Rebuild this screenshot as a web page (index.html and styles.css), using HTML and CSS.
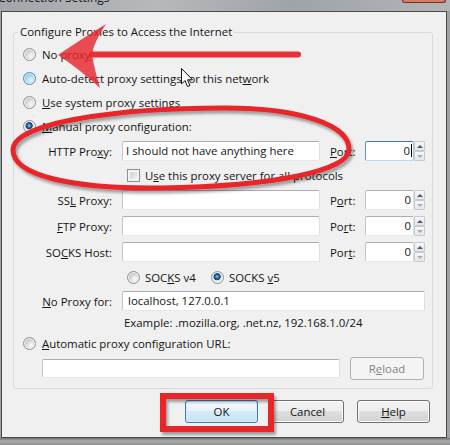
FILE: index.html
```html
<!DOCTYPE html>
<html>
<head>
<meta charset="utf-8">
<title>Connection Settings</title>
<link rel="stylesheet" href="styles.css">
</head>
<body>
<div class="titlebar"><span class="title">Connection Settings</span><span class="close"></span></div>
<div class="window">
  <fieldset class="group">
    <legend>Configure Proxies to Access the Internet</legend>
    <div class="opt"><span class="radio"></span><span>No prox<u>y</u></span></div>
    <div class="opt"><span class="radio hover"></span><span>Auto-detect proxy settings for this net<u>w</u>ork</span></div>
    <div class="opt"><span class="radio"></span><span><u>U</u>se system proxy settings</span></div>
    <div class="opt"><span class="radio on"></span><span><u>M</u>anual proxy configuration:</span></div>
    <div class="manual">
      <span class="lbl">HTTP Pro<u>x</u>y:</span>
      <span class="field">I should not have anything here</span>
      <span class="plbl"><u>P</u>ort:</span>
      <span class="port"><span class="pval focus">0<i class="caret"></i></span><span class="spin"><i class="up"></i><i class="dn"></i></span></span>

      <span class="share"><span class="check"></span><span>U<u>s</u>e this proxy server for all protocols</span></span>

      <span class="lbl">SS<u>L</u> Proxy:</span>
      <span class="field"></span>
      <span class="plbl">P<u>o</u>rt:</span>
      <span class="port"><span class="pval">0</span><span class="spin"><i class="up"></i><i class="dn"></i></span></span>

      <span class="lbl"><u>F</u>TP Proxy:</span>
      <span class="field"></span>
      <span class="plbl">Po<u>r</u>t:</span>
      <span class="port"><span class="pval">0</span><span class="spin"><i class="up"></i><i class="dn"></i></span></span>

      <span class="lbl">SO<u>C</u>KS Host:</span>
      <span class="field"></span>
      <span class="plbl">Por<u>t</u>:</span>
      <span class="port"><span class="pval">0</span><span class="spin"><i class="up"></i><i class="dn"></i></span></span>

      <span class="socks"><span class="rb v4"><span class="radio"></span><span>SOC<u>K</u>S v4</span></span><span class="rb"><span class="radio on"></span><span>SOCKS <u>v</u>5</span></span></span>

      <span class="lbl"><u>N</u>o Proxy for:</span>
      <span class="field wide">localhost, 127.0.0.1</span>

      <span class="example">Example: .mozilla.org, .net.nz, 192.168.1.0/24</span>
    </div>
    <div class="opt"><span class="radio"></span><span><u>A</u>utomatic proxy configuration URL:</span></div>
    <div class="urlrow"><span class="field url"></span><span class="btn reload">R<u>e</u>load</span></div>
  </fieldset>
  <div class="btnrow">
    <span class="btn default">OK</span>
    <span class="btn">Cancel</span>
    <span class="btn"><u>H</u>elp</span>
  </div>
</div>
<svg class="marks" width="450" height="445" viewBox="0 0 450 445">
  <defs>
    <filter id="sh" x="-10%" y="-20%" width="120%" height="150%">
      <feDropShadow dx="2" dy="3" stdDeviation="1.5" flood-color="#000" flood-opacity="0.35"/>
    </filter>
  </defs>
  <line x1="92" y1="54.5" x2="298" y2="54.5" stroke="#e8262c" stroke-width="6" stroke-linecap="round" opacity="0.95"/>
  <path fill="#e8262c" opacity="0.82" d="M58,55 Q80,40 106,24 Q94,42 92,54 Q94,68 100,88 Q78,68 58,55 Z"/>
  <path filter="url(#sh)" fill="none" stroke="#e8262c" stroke-width="5" d="M13,150 C13,122 120,108 225,108 C300,108 350,125 349,150 C348,170 280,186 160,188 C70,189 13,175 13,150 Z"/>
  <rect filter="url(#sh)" x="163" y="396" width="108" height="33" fill="none" stroke="#e8262c" stroke-width="6"/>
  <path d="M181.5,68.5 L181.5,84 L185,80.5 L187.5,86.5 L190,85.5 L187.5,79.8 L192.5,79.8 Z" fill="#fff" stroke="#111" stroke-width="1" stroke-linejoin="round"/>
</svg>
</body>
</html>
```

FILE: styles.css
```css
* { box-sizing: border-box; }
html, body { margin: 0; padding: 0; }
body {
  width: 450px;
  height: 445px;
  overflow: hidden;
  position: relative;
  background: linear-gradient(#9fa2a5 0, #9fa2a5 438px, #6e7072 438px, #a9abad 441px, #8c8e90 445px);
  font-family: "Open Sans", "Noto Sans", sans-serif;
  font-size: 11.4px;
  color: #141414;
}
u { text-decoration: underline; text-underline-offset: 1px; }
.titlebar {
  height: 11px;
  display: flex;
  justify-content: space-between;
  overflow: hidden;
  background: linear-gradient(90deg, #a3a6a9, #b6b8ba 35%, #a1a4a7 65%, #b2b4b6);
}
.title {
  margin-top: -10px;
  margin-left: -2px;
  line-height: 16px;
  font-size: 12px;
  color: #1a1a1a;
  white-space: nowrap;
}
.close {
  width: 44px;
  height: 3px;
  margin-right: 4px;
  background: #d97d6a;
  border: 1px solid #6a3328;
  border-top: 0;
  border-radius: 0 0 4px 4px;
}
.window {
  margin-left: 1px;
  width: 446px;
  height: 427px;
  border: 1px solid #4a4a4a;
  background: #f0f0f0;
  display: flex;
  flex-direction: column;
}
.group {
  margin: 12px 0 0 11px;
  width: 420px;
  min-width: 0;
  padding: 2px 0 8px 0;
  border: 1px solid #d5dbe0;
  border-radius: 3px;
}
legend {
  margin-left: 4px;
  padding: 0 2px;
  line-height: 16px;
}
.opt {
  display: flex;
  align-items: center;
  height: 24px;
  padding-left: 9px;
  gap: 6px;
  white-space: nowrap;
}
.radio {
  flex: none;
  width: 13px;
  height: 13px;
  border-radius: 50%;
  border: 1px solid #8e9093;
  background: radial-gradient(circle at 62% 66%, #ffffff 0, #e8e8e8 2.5px, #c9cacc 6px);
  box-shadow: inset 0 0 0 1px #f5f5f5;
}
.radio.hover {
  border-color: #4f88b4;
  background: radial-gradient(circle at 62% 66%, #eaf7fe 0, #c4e7fb 2.5px, #90cdf1 6px);
  box-shadow: inset 0 0 0 1px #e3f3fd;
}
.radio.on {
  background: radial-gradient(circle at 46% 42%, #9fd0ef 0, #2e78b2 1.6px, #123e6a 3.3px, #d9dbdd 3.9px, #f2f2f2 6px);
}
.manual {
  display: grid;
  grid-template-columns: 72px 198px 25px 60px;
  grid-template-rows: 26px 23px 26px 26px 26px 24px 24px 18px;
  column-gap: 10px;
  align-items: center;
  margin-left: 26px;
  white-space: nowrap;
}
.lbl { text-align: right; }
.field {
  display: block;
  height: 20px;
  background: #fff;
  border: 1px solid;
  border-color: #abadb3 #dbdfe6 #e3e9ef #c3c6cc;
  border-radius: 2px;
  padding-left: 3px;
  line-height: 18px;
  overflow: hidden;
  white-space: nowrap;
}
.field.wide { grid-column: 2 / 5; padding-left: 5px; }
.port { display: flex; height: 20px; }
.pval {
  width: 49px;
  height: 20px;
  background: #fff;
  border: 1px solid;
  border-color: #abadb3 #dbdfe6 #e3e9ef #c3c6cc;
  border-radius: 2px;
  text-align: right;
  padding-right: 2px;
  line-height: 18px;
}
.pval.focus { border-color: #3d7bad #a4c9e3 #b7d9ed #5a92c2; padding-right: 1px; }
.caret {
  display: inline-block;
  width: 1px;
  height: 13px;
  background: #000;
  vertical-align: -2px;
  margin-left: 1px;
}
.spin {
  width: 11px;
  display: flex;
  flex-direction: column;
}
.spin i {
  flex: 1;
  display: flex;
  align-items: center;
  justify-content: center;
  border: 1px solid #c6cacf;
  background: linear-gradient(#f7f7f7, #e4e5e7);
  border-radius: 1px;
}
.spin i::after {
  content: "";
  width: 0;
  height: 0;
  border-left: 3px solid transparent;
  border-right: 3px solid transparent;
}
.spin .up::after { border-bottom: 3px solid #4a5872; }
.spin .dn::after { border-top: 3px solid #a5acb8; }
.share {
  grid-column: 2 / 5;
  display: flex;
  align-items: center;
  gap: 5px;
  padding-left: 5px;
}
.check {
  flex: none;
  width: 13px;
  height: 13px;
  border: 1px solid #8e8f8f;
  background: linear-gradient(135deg, #c6cad0, #f7f7f7);
  box-shadow: inset 0 0 0 2px #f3f3f3;
}
.socks {
  grid-column: 2 / 5;
  display: flex;
  align-items: center;
  padding-left: 5px;
}
.rb { display: flex; align-items: center; gap: 5px; }
.rb.v4 { width: 84px; }
.example { grid-column: 2 / 5; padding-left: 2px; }
.urlrow {
  display: flex;
  align-items: center;
  gap: 10px;
  height: 23px;
  margin: 2px 0 0 28px;
}
.field.url { width: 298px; height: 19px; flex: none; }
.btn {
  flex: none;
  width: 73px;
  height: 23px;
  display: flex;
  align-items: center;
  justify-content: center;
  border: 1px solid #707070;
  border-radius: 3px;
  background: linear-gradient(#f3f3f3 0%, #ececec 50%, #dedede 50%, #d2d2d2 100%);
  box-shadow: inset 0 0 0 1px #fbfbfb;
  white-space: nowrap;
}
.btn.reload {
  width: 74px;
  border-color: #adb2b5;
  background: #f4f4f4;
  box-shadow: none;
  color: #838383;
}
.btn.default {
  border-color: #3c7fb1;
  background: linear-gradient(#f3f9fd 0%, #e6f2fa 50%, #d6eaf7 50%, #cae3f4 100%);
  box-shadow: inset 0 0 0 1px #d3ecfb;
}
.btnrow {
  display: flex;
  justify-content: flex-end;
  gap: 13px;
  margin-top: 11px;
  padding-right: 16px;
}
.marks {
  position: absolute;
  left: 0;
  top: 0;
  pointer-events: none;
}
```
